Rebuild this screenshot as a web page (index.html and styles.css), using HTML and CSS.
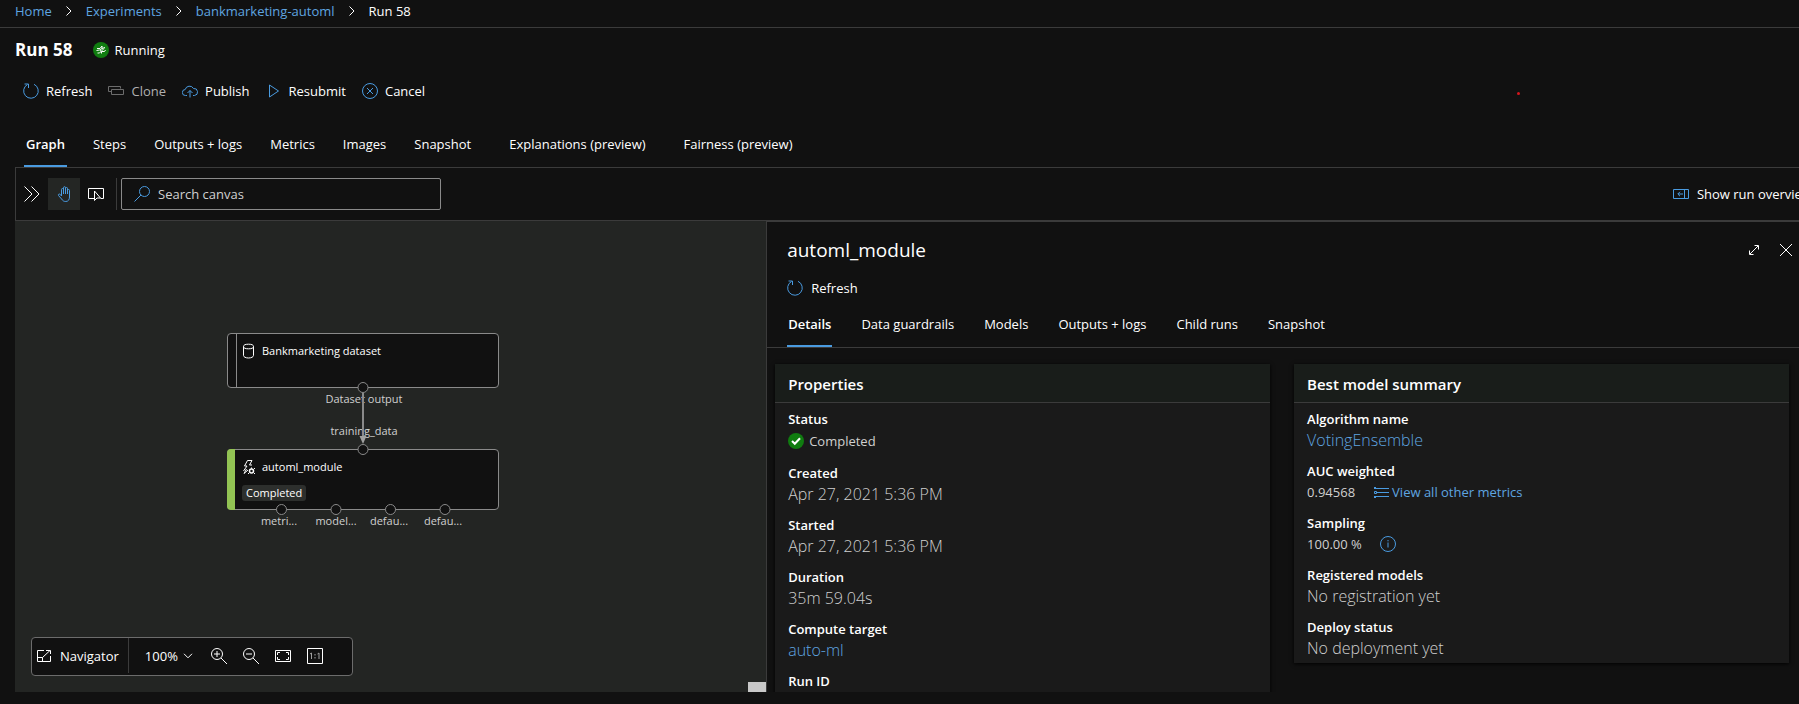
FILE: index.html
```html
<!DOCTYPE html>
<html lang="en">
<head>
<meta charset="utf-8">
<title>Run 58</title>
<link rel="stylesheet" href="styles.css">
</head>
<body>
<div class="app">
  <nav class="crumbs" aria-label="Breadcrumb">
    <a href="#">Home</a>
    <svg class="crumb-sep" viewBox="0 0 6 10"><path d="M.5 .5 5 5 .5 9.5"/></svg>
    <a href="#">Experiments</a>
    <svg class="crumb-sep" viewBox="0 0 6 10"><path d="M.5 .5 5 5 .5 9.5"/></svg>
    <a href="#">bankmarketing-automl</a>
    <svg class="crumb-sep" viewBox="0 0 6 10"><path d="M.5 .5 5 5 .5 9.5"/></svg>
    <span>Run 58</span>
  </nav>

  <header class="run-head">
    <h1>Run 58</h1>
    <span class="run-state">
      <svg class="icon" viewBox="0 0 16 16"><circle cx="8" cy="8" r="8" fill="#107c10"/><path d="M4 6.500h3l2-2.500v2.500l3-1M3.500 8.500l3-.5 2 1.500v2M4.500 11h2l4.500-4.500M9 9.500h2.500l1-1.500M7 8l2-1.500" stroke="#fff"/></svg>
      Running
    </span>
    <svg class="marker" viewBox="0 0 3 3"><circle cx="1.500" cy="1.500" r="1.500" fill="#d4161c"/></svg>
  </header>

  <div class="commands">
    <button type="button"><svg class="icon blue" viewBox="0 0 16 16"><path d="M4.500 1.500A7.300 7.300 0 1 0 11 1.300M1.500 1h4v4"/></svg>Refresh</button>
    <button type="button" disabled><svg class="icon" viewBox="0 0 16 16"><path d="M3.500 8.500h-3v-5h12v2M3.500 6.500h12v5h-12z"/></svg>Clone</button>
    <button type="button"><svg class="icon blue" viewBox="0 0 16 16"><path d="M5 12.500H3.500a3 3 0 0 1-.3-6A4.500 4.500 0 0 1 11.500 5.500a3.500 3.500 0 0 1 1 7H11M8 14.500v-7M5.500 10 8 7.500l2.500 2.500"/></svg>Publish</button>
    <button type="button"><svg class="icon blue" viewBox="0 0 16 16"><path d="M3.500 2v12l9-6z"/></svg>Resubmit</button>
    <button type="button"><svg class="icon blue" viewBox="0 0 16 16"><circle cx="8" cy="8" r="7.500"/><path d="m5 5 6 6M11 5l-6 6"/></svg>Cancel</button>
  </div>

  <div class="tabs run-tabs" role="tablist">
    <button type="button" role="tab" aria-selected="true">Graph</button>
    <button type="button" role="tab">Steps</button>
    <button type="button" role="tab">Outputs + logs</button>
    <button type="button" role="tab">Metrics</button>
    <button type="button" role="tab">Images</button>
    <button type="button" role="tab">Snapshot</button>
    <button type="button" role="tab" class="preview">Explanations (preview)</button>
    <button type="button" role="tab" class="preview">Fairness (preview)</button>
  </div>

  <div class="canvas-bar">
    <button type="button" class="tool" aria-label="Expand"><svg class="icon" viewBox="0 0 16 16"><path d="M.5 .5 8 8 .5 15.500M7.500 .5 15 8l-7.500 7.500"/></svg></button>
    <button type="button" class="tool on" aria-label="Pan"><svg class="icon blue" viewBox="0 0 16 16"><path d="M5.500 10V3.500a1 1 0 0 1 2 0V8M7.500 7.500V1.700a1 1 0 0 1 2 0V8M9.500 2.500a1 1 0 0 1 2 0V8M11.500 4.500a1 1 0 0 1 2 0v6.500c0 2.500-1.200 4.500-3.700 4.500-2.300 0-3.200-1-4.200-2.500L2.500 9.500c-.7-1 .7-2 1.600-1.200l1.400 1.700"/></svg></button>
    <button type="button" class="tool" aria-label="Select"><svg class="icon" viewBox="0 0 16 16"><path d="M6 12.500H.5v-10h15v10h-3M6.500 5v9.500l2.500-2.500h3.500z"/></svg></button>
    <span class="rule"></span>
    <label class="search">
      <svg class="icon blue" viewBox="0 0 16 16"><circle cx="10.500" cy="5.500" r="5"/><path d="M7 9 .5 15.500"/></svg>
      <input type="text" placeholder="Search canvas" aria-label="Search canvas">
    </label>
    <button type="button" class="overview"><svg class="icon blue" viewBox="0 0 16 16"><path d="M.5 3.500h15v9H.5zM11.500 3.500v9M10 8H5M7 5.800 4.800 8 7 10.200"/></svg>Show run overview</button>
  </div>

  <main class="work">
    <section class="canvas" aria-label="Graph">
      <div class="node dataset">
        <div class="node-title">
          <svg class="node-icon" viewBox="0 0 14 16"><path d="M1.500 3.500v9c0 1.400 2.200 2.500 5 2.500s5-1.100 5-2.500v-9"/><ellipse cx="6.500" cy="3.500" rx="5" ry="2.300"/></svg>
          Bankmarketing dataset
        </div>
      </div>
      <div class="node module">
        <div class="node-title">
          <svg class="node-icon" viewBox="0 0 14 16"><path d="M10 1.500H5.500L2.500 7H5L1.500 12M10 1.500 7.500 6H10M4.500 10 2 14.500 6 11"/><circle cx="9.500" cy="12" r="2" stroke-width="1.500"/><path d="M9.500 8.500v1.300M12 10l1-1M12 14l1 1M7 14l-1 1"/></svg>
          automl_module
        </div>
        <span class="pill">Completed</span>
      </div>
      <span class="port-label l-out">Dataset output</span>
      <span class="port-label l-in">training_data</span>
      <span class="port-label l-1">metri...</span>
      <span class="port-label l-2">model...</span>
      <span class="port-label l-3">defau...</span>
      <span class="port-label l-4">defau...</span>
      <svg class="wires" viewBox="0 0 272 188">
        <path d="M136 60v44" stroke="#8a8a8a" stroke-width="2"/><path d="M132.500 103h7l-3.500 8z" fill="#a0a0a0"/>
        <g fill="#111" stroke="#8a8a8a"><circle cx="136" cy="54.500" r="5"/><circle cx="136" cy="116.500" r="5"/><circle cx="54.500" cy="176.500" r="5"/><circle cx="109" cy="176.500" r="5"/><circle cx="163.500" cy="176.500" r="5"/><circle cx="218" cy="176.500" r="5"/></g>
      </svg>

      <div class="navigator">
        <button type="button" class="nav-btn"><svg class="icon" viewBox="0 0 16 16"><path d="M8 2.500H1.500v11h13V8M1.500 9.500h5v4M6.500 9.500l7.500-7M10 2.500h4.500V6"/></svg>Navigator</button>
        <label class="zoom">
          <select aria-label="Zoom level"><option>100%</option></select>
          <svg class="zoom-chev" viewBox="0 0 10 6"><path d="m1 .8 4 4 4-4"/></svg>
        </label>
        <button type="button" aria-label="Zoom in"><svg class="icon" viewBox="0 0 16 16"><circle cx="6" cy="6" r="5.500"/><path d="m10 10 6 6M6 3v6M3 6h6"/></svg></button>
        <button type="button" aria-label="Zoom out"><svg class="icon" viewBox="0 0 16 16"><circle cx="6" cy="6" r="5.500"/><path d="m10 10 6 6M3 6h6"/></svg></button>
        <button type="button" aria-label="Fit"><svg class="icon" viewBox="0 0 16 16"><path d="M.5 2.500h15v11H.5zM5 4.500H2.500V7M11 4.500h2.500V7M5 11.500H2.500V9M11 11.500h2.500V9"/></svg></button>
        <button type="button" aria-label="Actual size"><svg class="icon" viewBox="0 0 16 16"><path d="M.5 .5h15v15H.5z"/><path d="M3 6l1.500-1v6M10.500 6 12 5v6M8 6v1.500M8 9v1.500" stroke="#a0a0a0"/></svg></button>
      </div>
      <span class="corner"></span>
    </section>

    <section class="panel">
      <div class="panel-head">
        <h2>automl_module</h2>
        <button type="button" aria-label="Expand panel"><svg class="icon" viewBox="0 0 16 16"><path d="m4 12 8-8M8.500 3.500h4v4M3.500 8.500v4h4"/></svg></button>
        <button type="button" aria-label="Close panel"><svg class="icon" viewBox="0 0 16 16"><path d="m2 2 12 12M14 2 2 14"/></svg></button>
      </div>
      <div class="panel-cmd">
        <button type="button"><svg class="icon blue" viewBox="0 0 16 16"><path d="M4.500 1.500A7.300 7.300 0 1 0 11 1.300M1.500 1h4v4"/></svg>Refresh</button>
      </div>
      <div class="tabs panel-tabs" role="tablist">
        <button type="button" role="tab" aria-selected="true">Details</button>
        <button type="button" role="tab">Data guardrails</button>
        <button type="button" role="tab">Models</button>
        <button type="button" role="tab">Outputs + logs</button>
        <button type="button" role="tab">Child runs</button>
        <button type="button" role="tab">Snapshot</button>
      </div>
      <div class="cards">
        <article class="card">
          <h3>Properties</h3>
          <dl>
            <dt>Status</dt>
            <dd class="state"><svg class="icon" viewBox="0 0 16 16"><circle cx="8" cy="8" r="8" fill="#107c10"/><path d="m4 8 2.800 2.800L12 5.300" stroke="#fff" stroke-width="2"/></svg>Completed</dd>
            <dt>Created</dt><dd>Apr 27, 2021 5:36 PM</dd>
            <dt>Started</dt><dd>Apr 27, 2021 5:36 PM</dd>
            <dt>Duration</dt><dd>35m 59.04s</dd>
            <dt>Compute target</dt><dd><a href="#">auto-ml</a></dd>
            <dt>Run ID</dt><dd></dd>
          </dl>
        </article>
        <article class="card summary">
          <h3>Best model summary</h3>
          <dl>
            <dt>Algorithm name</dt><dd><a href="#">VotingEnsemble</a></dd>
            <dt>AUC weighted</dt>
            <dd class="small"><span>0.94568</span><a href="#" class="metrics"><svg class="icon blue" viewBox="0 0 16 16"><path d="M1 4.500h15M4 8.500h12M1 12.500h15M1.500 7.500h2v2h-2zM1 3.500h2M1 13.500h2"/></svg>View all other metrics</a></dd>
            <dt>Sampling</dt>
            <dd class="small"><span>100.00 %</span><svg class="icon blue" viewBox="0 0 16 16"><circle cx="8" cy="8" r="7.500"/><path d="M8 6.500v5M8 4v1.300"/></svg></dd>
            <dt>Registered models</dt><dd>No registration yet</dd>
            <dt>Deploy status</dt><dd>No deployment yet</dd>
          </dl>
        </article>
      </div>
    </section>
  </main>
</div>
</body>
</html>
```

FILE: styles.css
```css
* { box-sizing: border-box; }

body {
  margin: 0;
  background: #111;
  color: #fff;
  font: 13px/20px "Open Sans", "Noto Sans", sans-serif;
}

h1, h2, h3, dl, dd { margin: 0; }
a { color: #5fa5e0; text-decoration: none; }

button {
  display: flex;
  align-items: center;
  padding: 0;
  border: 0;
  background: none;
  color: inherit;
  font: inherit;
  white-space: nowrap;
}

svg { flex: none; fill: none; stroke: currentColor; }
.icon { width: 16px; height: 16px; }
.blue { color: #4a9be0; }

.app {
  display: flex;
  flex-direction: column;
  height: 100vh;
  padding-bottom: 12px;
  overflow: hidden;
}

.crumbs {
  display: flex;
  align-items: center;
  gap: 14px;
  padding: 1px 15px 6px;
  border-bottom: 1px solid #3b3b3b;
}
.crumb-sep { width: 6px; height: 10px; }

.run-head {
  display: flex;
  align-items: center;
  gap: 21px;
  padding: 10px 15px 0;
}
.run-head h1 { font-size: 17px; line-height: 24px; }
.run-state { display: flex; align-items: center; gap: 5px; }
.run-state circle { stroke: none; }
.marker { position: absolute; left: 1517px; top: 92px; width: 3px; height: 3px; stroke: none; }

.commands {
  display: flex;
  gap: 16px;
  padding: 19px 23px;
}
.commands button { gap: 7px; }
.commands button:disabled { color: #b0b0b0; }
.commands button:disabled .icon { color: #6c6c6c; }

.tabs { display: flex; }
.tabs button { position: relative; }
.tabs [aria-selected="true"] { font-weight: 600; }
.tabs [aria-selected="true"]::after {
  content: "";
  position: absolute;
  inset: auto -2px 0;
  height: 2px;
  background: #4a9be0;
}
.run-tabs { gap: 28px; padding: 0 26px; }
.run-tabs button { height: 47px; }
.run-tabs .preview { margin-left: 10px; }

.canvas-bar {
  display: flex;
  align-items: center;
  margin-left: 15px;
  padding: 10px 0;
  border: solid #3b3b3b;
  border-width: 1px 0 1px 1px;
}
.tool { justify-content: center; width: 32px; height: 32px; }
.tool.on { background: #242624; }
.rule { width: 1px; height: 32px; margin: 0 4px; background: #3b3b3b; }
.search {
  display: flex;
  align-items: center;
  gap: 8px;
  width: 320px;
  height: 32px;
  padding: 0 12px;
  border: 1px solid #8a8a8a;
  border-radius: 2px;
}
.search input {
  flex: 1;
  min-width: 0;
  padding: 0;
  border: 0;
  outline: 0;
  background: none;
  color: #fff;
  font: inherit;
}
.search input::placeholder { color: #d0d0d0; opacity: 1; }
.overview { gap: 8px; margin: 0 -13px 0 auto; }

.work {
  flex: 1;
  display: grid;
  grid-template-columns: 8fr 11fr;
  min-height: 0;
  margin-left: 15px;
}

.canvas { position: relative; overflow: hidden; background: #232523; font-size: 11px; }

.node {
  position: absolute;
  left: 212px;
  width: 272px;
  border: 1px solid #8a8a8a;
  border-radius: 4px;
  background: #111;
  padding: 7px 7px 6px 14px;
}
.node::before {
  content: "";
  position: absolute;
  inset: 0 auto 0 0;
  width: 8px;
  border-right: 1px solid #8a8a8a;
}
.node-title { display: flex; align-items: center; gap: 6px; }
.node-icon { width: 14px; height: 16px; }
.dataset { top: 112px; height: 55px; }
.module { top: 228px; height: 61px; }
.module::before {
  inset: -1px auto -1px -1px;
  border: 0;
  border-radius: 4px 0 0 4px;
  background: #92c353;
}
.pill {
  display: block;
  width: fit-content;
  margin-top: 8px;
  padding: 0 4px;
  border-radius: 3px;
  background: #2d2f2d;
  line-height: 16px;
}
.port-label { position: absolute; color: #d0d0d0; transform: translateX(-50%); line-height: 16px; }
.l-out, .l-in { left: 349px; }
.l-out { top: 170px; }
.l-in { top: 202px; }
.l-1, .l-2, .l-3, .l-4 { top: 292px; }
.l-1 { left: 264px; }
.l-2 { left: 321px; }
.l-3 { left: 374px; }
.l-4 { left: 428px; }
.wires { position: absolute; left: 212px; top: 112px; width: 272px; height: 188px; stroke: none; }

.navigator {
  position: absolute;
  left: 16px;
  bottom: 16px;
  display: flex;
  align-items: center;
  gap: 16px;
  width: 322px;
  height: 39px;
  padding: 0 0 2px 4px;
  border: 1px solid #6c6c6c;
  border-radius: 4px;
  background: #111;
  font-size: 13px;
}
.nav-btn { gap: 8px; align-self: stretch; padding-right: 9px; border-right: 1px solid #3b3b3b; }
.zoom { display: flex; align-items: center; gap: 4px; margin-right: 2px; }
.zoom select {
  padding: 0;
  border: 0;
  appearance: none;
  background: none;
  color: inherit;
  font: inherit;
}
.zoom-chev { width: 10px; height: 6px; }
.corner { position: absolute; right: 0; bottom: 0; width: 18px; height: 10px; background: #c8c8c8; }

.panel {
  display: flex;
  flex-direction: column;
  min-width: 0;
  border: solid #3b3b3b;
  border-width: 1px 0 0 1px;
  overflow: hidden;
}
.panel-head { display: flex; align-items: center; gap: 16px; padding: 14px 5px 0 20px; }
.panel-head h2 { flex: 1; font-size: 19px; line-height: 28px; font-weight: 400; }
.panel-cmd { padding: 14px 20px 0; }
.panel-cmd button { gap: 8px; }
.panel-tabs { gap: 30px; padding: 7px 21px 0; border-bottom: 1px solid #3b3b3b; }
.panel-tabs button { height: 42px; padding-bottom: 4px; }
.panel-tabs [aria-selected="true"]::after { inset: auto -1px 0; }

.cards {
  display: grid;
  grid-template-columns: 1fr 1fr;
  gap: 24px;
  align-items: start;
  padding: 16px 10px 16px 8px;
}
.card { background: #1a1a1a; box-shadow: 0 1px 4px #000; }
.card h3 {
  padding: 10px 13px 8px;
  border-bottom: 1px solid #3b3b3b;
  background: #191d1a;
  font-size: 15px;
  font-weight: 600;
}
.card dl { padding: 6px 13px; }
.card dt { font-weight: 600; line-height: 20px; }
.card dd { min-height: 22px; margin-bottom: 10px; color: #d0d0d0; font-size: 16px; font-weight: 300; line-height: 22px; }
.card .state { display: flex; align-items: center; gap: 5px; height: 24px; font-size: 13px; font-weight: 400; }
.state circle { stroke: none; }
.card .small { display: flex; align-items: center; gap: 18px; font-size: 13px; font-weight: 400; }
.metrics { display: flex; align-items: center; gap: 3px; }
.summary dl { padding-bottom: 0; }
.summary dd:last-child { margin-bottom: 4px; }
```
